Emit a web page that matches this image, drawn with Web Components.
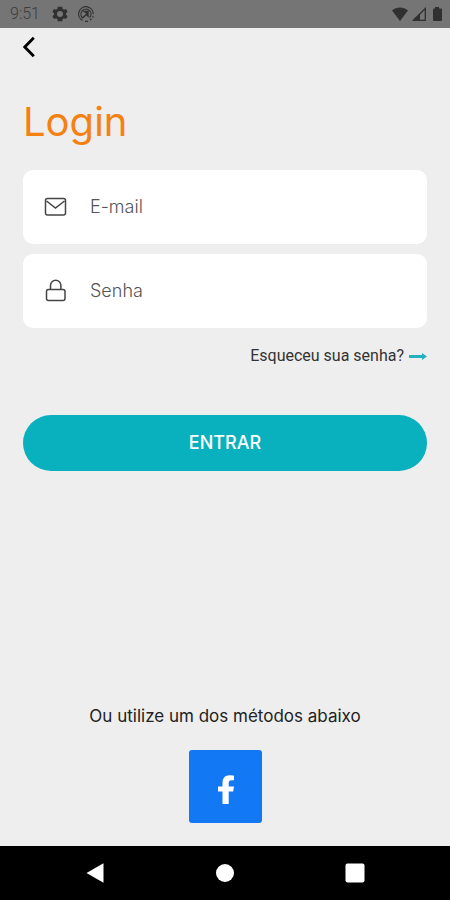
<!DOCTYPE html>
<html lang="pt-BR">
<head>
<meta charset="UTF-8">
<meta name="viewport" content="width=device-width, initial-scale=1.0">
<title>Login</title>
<style>
    body {
        margin: 0;
        background-color: #eeeeee;
        font-family: Inter, "Open Sans", sans-serif;
        color: #222;
    }
</style>
</head>
<body>

<login-screen></login-screen>

<script>

class StatusBar extends HTMLElement {
    constructor(){
        super();
        this.attachShadow({mode:'open'});
        this.render();
    }

    render(){
        this.shadowRoot.innerHTML = /* html */ `
            <style>
                :host {
                    display: flex;
                    align-items: center;
                    justify-content: space-between;
                    box-sizing: border-box;
                    height: 28px;
                    padding: 0 6px 0 10px;
                    background-color: #757575;
                    color: #3c3c3c;
                    font: 300 16px/28px Roboto, sans-serif;
                }
                div { display: flex; align-items: center; gap: 10px; }
                .right { gap: 4px; }
                svg { display: block; }
                .time { margin-right: 2px; }
            </style>
            <div>
                <span class="time">9:51</span>
                <svg width="16" height="16" viewBox="2 2 20 20" fill="#303030" aria-hidden="true">
                    <path fill-rule="evenodd" d="M19.4 13c.1-.7.1-1.3 0-2l2.1-1.7-2-3.5-2.5 1a8 8 0 0 0-1.7-1L14.9 3H9.1l-.4 2.8a8 8 0 0 0-1.7 1l-2.5-1-2 3.5L4.6 11a8 8 0 0 0 0 2l-2.1 1.7 2 3.5 2.5-1 1.7 1 .4 2.8h5.8l.4-2.8 1.7-1 2.5 1 2-3.5zM12 8.2a3.8 3.8 0 1 1 0 7.6 3.8 3.8 0 0 1 0-7.6z"/>
                </svg>
                <svg width="16" height="16" viewBox="0 0 16 16" fill="none" stroke="#303030" aria-hidden="true">
                    <path d="M4.5 14.4A7.3 7.3 0 1 1 15.3 8M7 15.3h3M12 14l1.5-1.2M14.6 11.5l.6-1.6" stroke-width="1.2"/>
                    <path d="M4.2 11.5A5 5 0 1 1 11.6 11.6" stroke-width="1.2"/>
                    <path d="M5.5 5.5H10V10L8.400 8.400 4.200 12.300" stroke-width="1.400"/>
                    <path d="M6 5.500h4v4z" fill="#303030" stroke="none"/>
                </svg>
            </div>
            <div class="right">
                <svg width="16" height="14" viewBox="0 0 16 14" fill="#303030" aria-hidden="true">
                    <path d="M0 3.5C4.5-.6 11.500-.6 16 3.5L8 14z"/>
                </svg>
                <svg width="14" height="14" viewBox="0 0 14 14" aria-hidden="true">
                    <path d="M1.5 13.3 13.3 1.5v11.8z" fill="none" stroke="#303030" stroke-width="1.3"/>
                    <path d="M1 13.5 8 6.5v7z" fill="#303030"/>
                </svg>
                <svg width="14" height="14" viewBox="0 0 14 14" fill="#303030" aria-hidden="true">
                    <path d="M5 0h4v1.5h2q1 0 1 1V13q0 1-1 1H4q-1 0-1-1V2.5q0-1 1-1h1z"/>
                </svg>
            </div>
        `
    }
}

customElements.define('status-bar', StatusBar);


class BackButton extends HTMLElement {
    constructor(){
        super();
        this.attachShadow({mode:'open'});
        this.render();
    }

    render(){
        this.shadowRoot.innerHTML = /* html */ `
            <style>
                :host { display: block; }
                button {
                    display: block;
                    padding: 8px 0;
                    border: 0;
                    background: none;
                    cursor: pointer;
                }
                svg { display: block; }
            </style>
            <button type="button" aria-label="Voltar">
                <svg width="12" height="22" viewBox="0 0 12 22" fill="none" stroke="#000" stroke-width="2.8">
                    <path d="M10.8 1.8 1.8 11l9 9.2"/>
                </svg>
            </button>
        `
    }
}

customElements.define('back-button', BackButton);


// the icon goes in the slot and works as the label of the input
class FormField extends HTMLElement {
    constructor(){
        super();
        this.attachShadow({mode:'open'});
        this.render();
    }

    render(){
        const type = this.getAttribute('type') || 'text';
        const label = this.getAttribute('label');

        this.shadowRoot.innerHTML = /* html */ `
            <style>
                :host { display: block; }
                .field {
                    display: flex;
                    align-items: center;
                    gap: 23px;
                    height: 74px;
                    padding: 0 20px;
                    border-radius: 10px;
                    background-color: #fff;
                }
                label { display: block; flex: none; }
                input {
                    flex: 1;
                    min-width: 0;
                    padding: 0;
                    border: 0;
                    outline: 0;
                    background: none;
                    color: #333;
                    font: 300 18px/24px Inter, "Open Sans", sans-serif;
                }
                input::placeholder { color: #555; opacity: 1; }
            </style>
            <div class="field">
                <label for="input"><slot></slot></label>
                <input id="input" type="${ type }" placeholder="${ label }" aria-label="${ label }">
            </div>
        `
    }
}

customElements.define('form-field', FormField);


class MainButton extends HTMLElement {
    constructor(){
        super();
        this.attachShadow({mode:'open'});
        this.render();
    }

    render(){
        this.shadowRoot.innerHTML = /* html */ `
            <style>
                :host { display: block; }
                button {
                    display: block;
                    width: 100%;
                    height: 56px;
                    padding: 0;
                    border: 0;
                    border-radius: 28px;
                    background-color: #09b1be;
                    color: #fff;
                    font: 500 18px/24px Inter, "Open Sans", sans-serif;
                    cursor: pointer;
                }
            </style>
            <button type="submit"><slot></slot></button>
        `
    }
}

customElements.define('main-button', MainButton);


class FacebookButton extends HTMLElement {
    constructor(){
        super();
        this.attachShadow({mode:'open'});
        this.render();
    }

    render(){
        this.shadowRoot.innerHTML = /* html */ `
            <style>
                :host { display: block; }
                button {
                    display: flex;
                    align-items: center;
                    justify-content: center;
                    width: 73px;
                    height: 73px;
                    padding: 6px 0 0 2px;
                    border: 0;
                    border-radius: 3px;
                    background-color: #1278f3;
                    cursor: pointer;
                }
            </style>
            <button type="button" aria-label="Entrar com Facebook">
                <svg width="16" height="29" viewBox="0 0 16 29" fill="#fff">
                    <path d="M4.5 29V16.5H0v-5h4.5V8C4.5 3 7.3.3 11.5.3c1.800 0 3.5.2 4.5.4V5.300h-2.500c-2 0-2.800 1.200-2.800 2.800v3.400H16l-.8 5h-4.500V29z"/>
                </svg>
            </button>
        `
    }
}

customElements.define('facebook-button', FacebookButton);


class NavBar extends HTMLElement {
    constructor(){
        super();
        this.attachShadow({mode:'open'});
        this.render();
    }

    render(){
        this.shadowRoot.innerHTML = /* html */ `
            <style>
                :host { display: block; background-color: #000; }
                nav {
                    display: flex;
                    justify-content: space-evenly;
                    align-items: center;
                    height: 54px;
                    gap: 24px;
                }
                button {
                    padding: 0;
                    border: 0;
                    background: none;
                    cursor: pointer;
                }
                svg { display: block; }
            </style>
            <nav>
                <button type="button" aria-label="Voltar">
                    <svg width="20" height="20" viewBox="0 0 20 20" fill="#fff"><path d="M17.500.200v19.600L.5 10z"/></svg>
                </button>
                <button type="button" aria-label="Início">
                    <svg width="20" height="20" viewBox="0 0 20 20" fill="#fff"><circle cx="10" cy="10" r="9"/></svg>
                </button>
                <button type="button" aria-label="Recentes">
                    <svg width="20" height="20" viewBox="0 0 20 20" fill="#fff"><rect x=".5" y=".5" width="19" height="19" rx="2"/></svg>
                </button>
            </nav>
        `
    }
}

customElements.define('nav-bar', NavBar);


class LoginScreen extends HTMLElement {
    constructor(){
        super();
        this.attachShadow({mode:'open'});
        this.render();
        this.shadowRoot.querySelector('form').addEventListener('submit', this.handleSubmit.bind(this));
    }

    handleSubmit(e){
        e.preventDefault();
    }

    render(){
        this.shadowRoot.innerHTML = /* html */ `
            <style>
                :host {
                    display: flex;
                    flex-direction: column;
                    min-height: 100vh;
                }
                main {
                    flex: 1;
                    display: flex;
                    flex-direction: column;
                    padding: 0 23px 23px;
                }
                h1 {
                    margin: 32px 0 24px;
                    color: #f58112;
                    font-size: 40px;
                    font-weight: 400;
                    line-height: 48px;
                }
                form { display: flex; flex-direction: column; gap: 10px; }
                svg { display: block; }
                .forgot {
                    display: flex;
                    align-items: center;
                    align-self: flex-end;
                    gap: 5px;
                    margin: 6px 0 37px;
                    color: #333;
                    font: 16px/24px Roboto, sans-serif;
                    text-decoration: none;
                }
                footer {
                    display: flex;
                    flex-direction: column;
                    align-items: center;
                    gap: 22px;
                    margin-top: auto;
                }
                p { margin: 0; font-size: 17px; line-height: 24px; }
            </style>
            <status-bar></status-bar>
            <main>
                <back-button></back-button>
                <h1>Login</h1>
                <form>
                    <form-field type="email" label="E-mail">
                        <svg width="24" height="24" viewBox="0 0 24 24" fill="none" stroke="#444" stroke-width="1.5" aria-hidden="true">
                            <rect x="2.5" y="3.5" width="20" height="16.5" rx="2"/>
                            <path d="M3.5 6 12.5 13 21.5 6"/>
                        </svg>
                    </form-field>
                    <form-field type="password" label="Senha">
                        <svg width="24" height="24" viewBox="0 0 24 24" fill="none" stroke="#444" stroke-width="1.5" aria-hidden="true">
                            <rect x="3.5" y="10.5" width="18.5" height="11" rx="2"/>
                            <path d="M7.5 10.5V6.500a5.200 5.200 0 0 1 10.400 0v4"/>
                        </svg>
                    </form-field>
                    <a class="forgot" href="#">
                        Esqueceu sua senha?
                        <svg width="18" height="8" viewBox="0 0 18 8" fill="#24b0be" aria-hidden="true">
                            <path d="M0 3h13V1l5 3.500L13 8V6H0z"/>
                        </svg>
                    </a>
                    <main-button>ENTRAR</main-button>
                </form>
                <footer>
                    <p>Ou utilize um dos métodos abaixo</p>
                    <facebook-button></facebook-button>
                </footer>
            </main>
            <nav-bar></nav-bar>
        `
    }
}

customElements.define('login-screen', LoginScreen);

</script>
</body>
</html>
